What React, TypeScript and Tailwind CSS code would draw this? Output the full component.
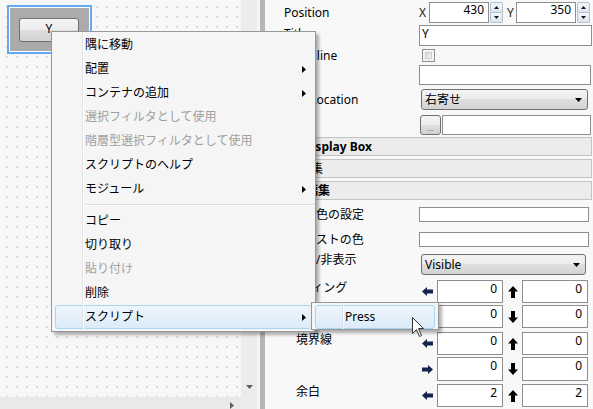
import React from "react";

function LeftArrow() {
  return (
    <svg width="11" height="9" viewBox="0 0 11 9">
      <polygon points="0,4.5 5,0 5,2.5 11,2.5 11,6.5 5,6.5 5,9" fill="#14234c" />
    </svg>
  );
}
function RightArrow() {
  return (
    <svg width="11" height="9" viewBox="0 0 11 9">
      <polygon points="11,4.5 6,0 6,2.5 0,2.5 0,6.5 6,6.5 6,9" fill="#14234c" />
    </svg>
  );
}
function UpArrow() {
  return (
    <svg width="10" height="12" viewBox="0 0 10 12">
      <polygon points="5,0 10,5.5 7,5.5 7,12 3,12 3,5.5 0,5.5" fill="#000" />
    </svg>
  );
}
function DownArrow() {
  return (
    <svg width="10" height="12" viewBox="0 0 10 12">
      <polygon points="5,12 10,6.5 7,6.5 7,0 3,0 3,6.5 0,6.5" fill="#000" />
    </svg>
  );
}
function TriRight() {
  return (
    <svg width="4" height="7" viewBox="0 0 4 7">
      <polygon points="0,0 4,3.5 0,7" fill="#000" />
    </svg>
  );
}
function TriDown({ c = "#000" }: { c?: string }) {
  return (
    <svg width="7" height="4" viewBox="0 0 7 4">
      <polygon points="0,0 7,0 3.5,4" fill={c} />
    </svg>
  );
}

function Spinner() {
  return (
    <div className="ml-px flex h-full w-[13px] flex-col">
      <div className="flex flex-1 items-center justify-center rounded-t-[2px] border border-[#b3c0cf] bg-[linear-gradient(#f3f7fb,#dde6f0)]">
        <svg width="5" height="3" viewBox="0 0 5 3">
          <polygon points="2.5,0 5,3 0,3" fill="#1a1a1a" />
        </svg>
      </div>
      <div className="flex flex-1 items-center justify-center rounded-b-[2px] border border-t-0 border-[#b3c0cf] bg-[linear-gradient(#f3f7fb,#dde6f0)]">
        <svg width="5" height="3" viewBox="0 0 5 3">
          <polygon points="0,0 5,0 2.5,3" fill="#1a1a1a" />
        </svg>
      </div>
    </div>
  );
}

function NumBox({ v }: { v: string }) {
  return (
    <div className="ml-[4px] h-full w-[66px] border border-[#8e8e8e] bg-white pr-[5px] text-right leading-[16px]">
      {v}
    </div>
  );
}

type Item = { t: string; sub?: boolean; dis?: boolean; hi?: boolean } | "sep";

const items: Item[] = [
  { t: "隅に移動" },
  { t: "配置", sub: true },
  { t: "コンテナの追加", sub: true },
  { t: "選択フィルタとして使用", dis: true },
  { t: "階層型選択フィルタとして使用", dis: true },
  { t: "スクリプトのヘルプ" },
  { t: "モジュール", sub: true },
  "sep",
  { t: "コピー" },
  { t: "切り取り" },
  { t: "貼り付け", dis: true },
  { t: "削除" },
  { t: "スクリプト", sub: true, hi: true },
];

export default function App() {
  return (
    <div className="relative flex h-[409px] w-[593px] overflow-hidden bg-[#f8f8f8] font-['Noto_Sans','Noto_Sans_CJK_JP',sans-serif] text-[12px] text-black">
      {/* left canvas area */}
      <div className="flex w-[257px] shrink-0 flex-col">
        <div className="flex h-[397px]">
          <div className="relative w-[241px] bg-[#f7f7f7] bg-[radial-gradient(circle,#d7d7d7_1px,transparent_1.3px)] [background-position:2px_2px] [background-size:10px_10px]">
            <div className="absolute left-[7px] top-[5px] h-[49px] w-[85px] border-2 border-[#62a9f3] bg-white p-px">
              <div className="relative h-full w-full bg-[#ababab]">
                <div className="absolute left-[9px] top-[10px] flex h-[24px] w-[60px] items-center justify-center rounded-[3px] border border-[#707070] bg-[linear-gradient(#f4f4f4_0%,#ececec_50%,#dedede_50%,#d3d3d3_100%)] pb-[3px] leading-[14px]">
                  Y
                </div>
              </div>
            </div>
          </div>
          <div className="flex w-[16px] flex-col items-center justify-end bg-[#ececec] pb-[8px]">
            <TriDown c="#606060" />
          </div>
        </div>
        <div className="flex flex-1">
          <div className="flex w-[241px] items-start justify-end bg-[#e9e9e9] pr-[7px] pt-[5px]">
            <svg width="4" height="7" viewBox="0 0 4 7">
              <polygon points="0,0 4,3.5 0,7" fill="#606060" />
            </svg>
          </div>
          <div className="w-[16px] bg-[#ececec]" />
        </div>
      </div>
      <div className="w-[3px] shrink-0 bg-[#f6f6f6]" />
      <div className="w-[5px] shrink-0 bg-[#b6b6b6]" />

      {/* property panel */}
      <div className="flex flex-1 flex-col pt-[2px]">
        <div className="flex h-[21px] items-center">
          <div className="w-[154px] shrink-0 pl-[19px] leading-[16px]">Position</div>
          <div className="w-[10px] leading-[16px] text-[#222]">X</div>
          <div className="h-full w-[60px] border border-[#8e8e8e] bg-white pr-[4px] text-right leading-[14px]">430</div>
          <Spinner />
          <div className="ml-[4px] w-[9px] leading-[16px] text-[#222]">Y</div>
          <div className="h-full w-[60px] border border-[#8e8e8e] bg-white pr-[4px] text-right leading-[14px]">350</div>
          <Spinner />
        </div>
        <div className="mt-[2px] flex h-[21px] items-start">
          <div className="mt-[1px] w-[154px] shrink-0 pl-[19px] leading-[16px]">Title</div>
          <div className="h-full w-[173px] border border-[#8e8e8e] bg-white pl-[2px] leading-[16px]">Y</div>
        </div>
        <div className="mt-[3px] flex h-[13px] items-center">
          <div className="w-[154px] shrink-0 pl-[23px] leading-[16px]">Multiline</div>
          <div className="ml-[3px] h-[13px] w-[13px] border border-[#8e8f8f] bg-[#f4f4f4] p-[2px]">
            <div className="h-full w-full border border-[#cfcfcf] bg-[linear-gradient(135deg,#d6d6d6,#f6f6f6)]" />
          </div>
        </div>
        <div className="mt-[3px] flex h-[20px] items-center">
          <div className="w-[154px] shrink-0 pl-[19px] leading-[16px]">Hint</div>
          <div className="h-full w-[172px] border border-[#8e8e8e] bg-white" />
        </div>
        <div className="mt-[4px] flex h-[21px] items-center">
          <div className="w-[154px] shrink-0 pl-[19px] leading-[16px]">Text Location</div>
          <div className="ml-[2px] flex h-full w-[167px] items-center justify-between rounded-[3px] border border-[#707070] bg-[linear-gradient(#f4f4f4_0%,#ececec_50%,#dedede_50%,#d3d3d3_100%)] pl-[3px] pr-[5px] leading-[16px]">
            <span>右寄せ</span>
            <TriDown />
          </div>
        </div>
        <div className="mt-[5px] flex h-[20px] items-center">
          <div className="w-[154px] shrink-0 pl-[19px] leading-[16px]">画像</div>
          <div className="ml-px flex h-full w-[21px] items-end justify-center rounded-[3px] border border-[#707070] bg-[linear-gradient(#f4f4f4_0%,#ececec_50%,#dedede_50%,#d3d3d3_100%)] pb-[2px] text-[8px] leading-[8px] text-[#666]">
            ...
          </div>
          <div className="ml-px h-full w-[149px] border border-[#8e8e8e] bg-white" />
        </div>

        <div className="mx-px mt-[2px] flex h-[19px] items-center border border-[#c4c4c4] bg-[#ececec] pl-[36px] font-bold leading-[16px]">
          Display Box
        </div>
        <div className="mx-px mt-[3px] flex h-[19px] items-center border border-[#c4c4c4] bg-[#ececec] pl-[32px] leading-[16px]">
          編集
        </div>
        <div className="mx-px mt-[3px] flex h-[19px] items-center border border-[#c4c4c4] bg-[#ececec] pl-[15px] font-bold leading-[16px]">
          表示編集
        </div>

        <div className="mt-[7px] flex h-[15px] items-center">
          <div className="w-[154px] shrink-0 pl-[27px] leading-[16px]">背景色の設定</div>
          <div className="h-full w-[170px] border border-[#8e8e8e] bg-white" />
        </div>
        <div className="mt-[10px] flex h-[15px] items-center">
          <div className="w-[154px] shrink-0 pl-[27px] leading-[16px]">テキストの色</div>
          <div className="h-full w-[170px] border border-[#8e8e8e] bg-white" />
        </div>
        <div className="mt-[7px] flex h-[21px] items-start">
          <div className="-mt-[2px] w-[154px] shrink-0 pl-[27px] leading-[16px]">表示/非表示</div>
          <div className="ml-[2px] flex h-full w-[165px] items-center justify-between rounded-[3px] border border-[#707070] bg-[linear-gradient(#f4f4f4_0%,#ececec_50%,#dedede_50%,#d3d3d3_100%)] pl-[3px] pr-[5px] leading-[16px]">
            <span>Visible</span>
            <TriDown />
          </div>
        </div>

        <div className="mt-[5px] flex h-[23px] items-center">
          <div className="w-[154px] shrink-0 self-start pl-[23px] leading-[16px]">パディング</div>
          <div className="ml-[3px] flex w-[11px]"><LeftArrow /></div>
          <NumBox v="0" />
          <div className="ml-[5px] flex w-[10px]"><UpArrow /></div>
          <NumBox v="0" />
        </div>
        <div className="mt-[2px] flex h-[23px] items-center">
          <div className="w-[154px] shrink-0" />
          <div className="ml-[3px] flex w-[11px]"><RightArrow /></div>
          <NumBox v="0" />
          <div className="ml-[5px] flex w-[10px]"><DownArrow /></div>
          <NumBox v="0" />
        </div>
        <div className="mt-[4px] flex h-[23px] items-center">
          <div className="w-[154px] shrink-0 self-start pl-[31px] leading-[16px]">境界線</div>
          <div className="ml-[3px] flex w-[11px]"><LeftArrow /></div>
          <NumBox v="0" />
          <div className="ml-[5px] flex w-[10px]"><UpArrow /></div>
          <NumBox v="0" />
        </div>
        <div className="mt-[2px] flex h-[24px] items-center">
          <div className="w-[154px] shrink-0" />
          <div className="ml-[3px] flex w-[11px]"><RightArrow /></div>
          <NumBox v="0" />
          <div className="ml-[5px] flex w-[10px]"><DownArrow /></div>
          <NumBox v="0" />
        </div>
        <div className="mt-[3px] flex h-[23px] items-center">
          <div className="w-[154px] shrink-0 self-start pl-[31px] leading-[16px]">余白</div>
          <div className="ml-[3px] flex w-[11px]"><LeftArrow /></div>
          <NumBox v="2" />
          <div className="ml-[5px] flex w-[10px]"><UpArrow /></div>
          <NumBox v="2" />
        </div>
      </div>

      {/* context menu */}
      <div className="absolute left-[51px] top-[31px] flex w-[265px] flex-col border border-[#979797] bg-[#f5f5f5] pb-[2px] pt-px shadow-[3px_3px_3px_rgba(0,0,0,0.3)]">
        {items.map((it, i) =>
          it === "sep" ? (
            <div key={i} className="flex h-[8px] flex-col justify-center pl-[32px]">
              <div className="h-px bg-[#e0e0e0]" />
              <div className="h-px bg-white" />
            </div>
          ) : (
            <div
              key={i}
              className={
                it.hi
                  ? "mx-[3px] flex h-[24px] items-center justify-between rounded-[3px] border border-[#a9d6f1] bg-[linear-gradient(#eef6fd,#dcebf9)] pl-[29px] pr-[5px] leading-[16px]"
                  : it.dis
                  ? "mx-[3px] flex h-[24px] items-center justify-between rounded-[3px] border border-transparent pl-[29px] pr-[5px] leading-[16px] text-[#a0a0a0]"
                  : "mx-[3px] flex h-[24px] items-center justify-between rounded-[3px] border border-transparent pl-[29px] pr-[5px] leading-[16px]"
              }
            >
              <span>{it.t}</span>
              {it.sub ? <TriRight /> : null}
            </div>
          )
        )}
        <div className="pointer-events-none absolute bottom-0 left-[30px] top-0 w-px bg-[#e2e3e3]" />
        <div className="pointer-events-none absolute bottom-0 left-[31px] top-0 w-px bg-white" />
      </div>

      {/* submenu */}
      <div className="absolute left-[311px] top-[302px] w-[128px] border border-[#979797] bg-[#f5f5f5] pt-[2px] shadow-[3px_3px_3px_rgba(0,0,0,0.3)]">
        <div className="mx-[3px] flex h-[24px] items-center rounded-[3px] border border-[#a9d6f1] bg-[linear-gradient(#eef6fd,#dcebf9)] pl-[29px] leading-[16px]">
          Press
        </div>
        <div className="pointer-events-none absolute bottom-0 left-[30px] top-0 w-px bg-[#d6dfe6]" />
        <div className="pointer-events-none absolute bottom-0 left-[31px] top-0 w-px bg-white/70" />
      </div>

      {/* mouse cursor */}
      <svg className="absolute left-[412px] top-[317px]" width="13" height="21" viewBox="0 0 13 21">
        <path d="M0.5 0.5 L0.5 16.5 L4.5 12.5 L7.5 19.5 L9.5 18.5 L6.5 11.5 L11.5 11.5 Z" fill="#fff" stroke="#333" strokeWidth="1" strokeLinejoin="round" />
      </svg>
    </div>
  );
}
